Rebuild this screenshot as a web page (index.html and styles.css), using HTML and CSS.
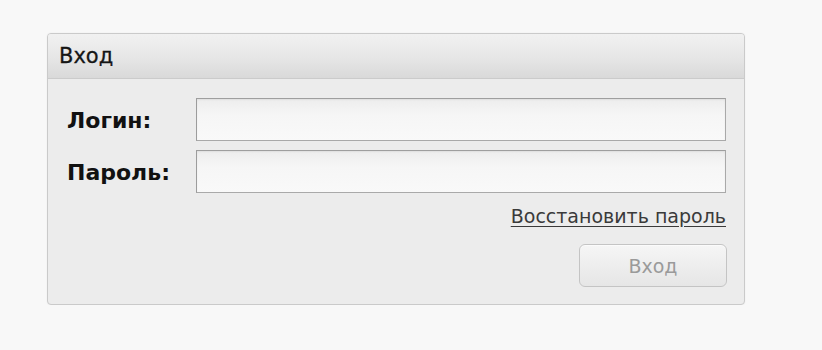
FILE: index.html
```html
<!DOCTYPE html>
<html lang="ru">
<head>
<meta charset="utf-8">
<title>Вход</title>
<link rel="stylesheet" href="styles.css">
</head>
<body>
<div class="panel">
  <div class="panel-header">Вход</div>
  <form class="panel-body">
    <div class="fields">
      <label class="label" for="login">Логин:</label>
      <input class="input" id="login" type="text">
      <label class="label" for="pass">Пароль:</label>
      <input class="input" id="pass" type="password">
    </div>
    <div class="link-row"><a class="link" href="#">Восстановить пароль</a></div>
    <div class="btn-row"><button class="btn" type="button">Вход</button></div>
  </form>
</div>
</body>
</html>
```
FILE: styles.css
```css
html, body {
  margin: 0;
  padding: 0;
  background: #f8f8f8;
  font-family: "DejaVu Sans", "Liberation Sans", sans-serif;
}
body {
  padding: 33px 0 0 47px;
}
.panel {
  width: 696px;
  border: 1px solid #cacaca;
  border-radius: 4px;
  background: #ececec;
  box-shadow: 0 0 2px rgba(0,0,0,0.06);
  overflow: hidden;
}
.panel-header {
  height: 45px;
  box-sizing: border-box;
  padding: 10px 0 0 11px;
  font-size: 21px;
  line-height: 24px;
  color: #151515;
  -webkit-text-stroke: 0.3px #151515;
  background: linear-gradient(#f1f1f1, #e6e6e6 55%, #d9d9d9);
  border-bottom: 1px solid #cbcbcb;
}
.panel-body {
  margin: 0;
  padding: 19px 18px 17px 19px;
}
.fields {
  display: grid;
  grid-template-columns: 129px 1fr;
  row-gap: 9px;
  align-items: center;
}
.label {
  font-weight: bold;
  font-size: 22px;
  color: #111;
  padding-top: 2px;
}
.input {
  height: 43px;
  box-sizing: border-box;
  border: 1px solid #a9a9a9;
  border-left-color: #9c9c9c;
  border-top-color: #9e9e9e;
  background: linear-gradient(#ededed, #f6f6f6 40%, #f9f9f9);
  box-shadow: inset 0 1px 2px rgba(0,0,0,0.06);
  margin: 0;
  padding: 0 6px;
  font: 16px "DejaVu Sans", sans-serif;
}
.link-row {
  display: flex;
  justify-content: flex-end;
  margin-top: 13px;
  line-height: 21px;
}
.link {
  font-size: 19px;
  color: #3a3a3a;
  text-decoration: underline;
  text-underline-offset: 3px;
}
.btn-row {
  display: flex;
  justify-content: flex-end;
  margin-top: 17px;
  margin-right: -1px;
}
.btn {
  width: 148px;
  height: 43px;
  border: 1px solid #c4c4c4;
  border-radius: 6px;
  background: linear-gradient(#f6f6f6, #ececec 60%, #e6e6e6);
  box-shadow: inset 0 1px 0 #fbfbfb;
  font: 19px "DejaVu Sans", sans-serif;
  color: #9a9a9a;
  padding: 0;
}
```
